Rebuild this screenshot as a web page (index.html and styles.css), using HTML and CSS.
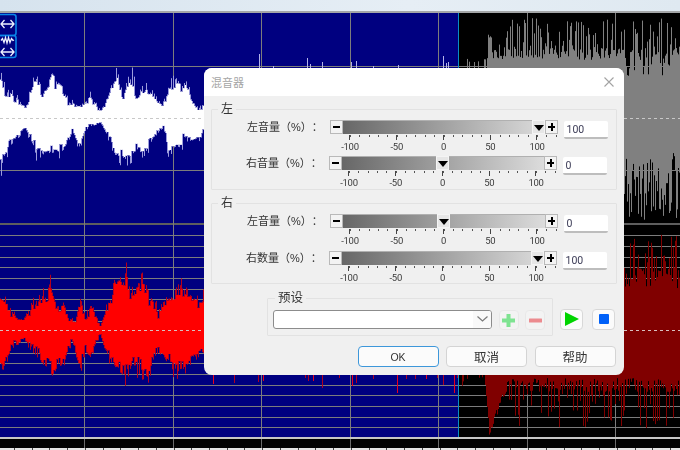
FILE: index.html
```html
<!DOCTYPE html>
<html lang="zh-CN">
<head>
<meta charset="utf-8">
<title>混音器</title>
<link rel="stylesheet" href="styles.css">
</head>
<body>
<div class="app">
  <div class="chrome"></div>
  <div class="editor">
    <canvas id="wave" class="wave" width="680" height="437"></canvas>
    <svg class="zoom-tools" width="18" height="46" viewBox="0 0 18 46" fill="none">
      <rect x="-4" y="1.500" width="20" height="21" rx="2.500" stroke="#0a84e8" stroke-width="1.600"/>
      <rect x="-4" y="22.500" width="20" height="22" rx="2.500" stroke="#0a84e8" stroke-width="1.600"/>
      <g stroke="#eef1ff" stroke-width="1.300">
        <path d="M1 11H14M4.500 7L1 11L4.500 15M10.500 7L14 11L10.500 15"/>
        <path d="M1 27.500L2.500 25.500L4 29.500L5.500 24.500L7 30L8.500 24.500L10 29.500L11.500 25.500L13 27.500L14 27"/>
        <path d="M1 39H14M4.500 35L1 39L4.500 43M10.500 35L14 39L10.500 43"/>
      </g>
    </svg>

    <section class="dialog">
      <header class="dialog-title">
        <span>混音器</span>
        <svg class="close" width="10" height="10" viewBox="0 0 10 10"><path d="M0.500 0.500L9.500 9.500M9.500 0.500L0.500 9.500" stroke="#a3a3a3" stroke-width="1.100" fill="none"/></svg>
      </header>
      <div class="dialog-body">
        <fieldset class="group">
          <legend>左</legend>
          <div class="row">
            <label class="row-label">左音量（%）：</label>
            <div class="slider">
              <div class="slider-bar">
                <span class="step step-minus"></span>
                <div class="track"><span class="thumb thumb-max"></span></div>
                <span class="step step-plus"></span>
              </div>
              <div class="scale"><span>-100</span><span>-50</span><span>0</span><span>50</span><span>100</span></div>
            </div>
            <input class="value" value="100">
          </div>
          <div class="row row-back">
            <label class="row-label">右音量（%）：</label>
            <div class="slider">
              <div class="slider-bar">
                <span class="step step-minus"></span>
                <div class="track"><span class="thumb thumb-mid"></span></div>
                <span class="step step-plus"></span>
              </div>
              <div class="scale"><span>-100</span><span>-50</span><span>0</span><span>50</span><span>100</span></div>
            </div>
            <input class="value" value="0">
          </div>
        </fieldset>

        <fieldset class="group group-right">
          <legend>右</legend>
          <div class="row row-tall">
            <label class="row-label">左音量（%）：</label>
            <div class="slider">
              <div class="slider-bar">
                <span class="step step-minus"></span>
                <div class="track"><span class="thumb thumb-mid"></span></div>
                <span class="step step-plus"></span>
              </div>
              <div class="scale"><span>-100</span><span>-50</span><span>0</span><span>50</span><span>100</span></div>
            </div>
            <input class="value" value="0">
          </div>
          <div class="row row-back">
            <label class="row-label">右数量（%）：</label>
            <div class="slider">
              <div class="slider-bar">
                <span class="step step-minus"></span>
                <div class="track"><span class="thumb thumb-max"></span></div>
                <span class="step step-plus"></span>
              </div>
              <div class="scale"><span>-100</span><span>-50</span><span>0</span><span>50</span><span>100</span></div>
            </div>
            <input class="value" value="100">
          </div>
        </fieldset>

        <div class="preset-row">
          <fieldset class="group preset">
            <legend>预设</legend>
            <div class="preset-controls">
              <div class="combo">
                <span class="combo-arrow">
                  <svg width="11" height="6" viewBox="0 0 11 6"><path d="M0.500 0.500L5.500 5L10.500 0.500" stroke="#7a7a7a" stroke-width="1.200" fill="none"/></svg>
                </span>
              </div>
              <button class="icon-btn icon-btn-off" type="button" aria-label="添加">
                <svg width="13" height="13" viewBox="0 0 13 13"><path d="M4.500 0H8.500V4.500H13V8.500H8.500V13H4.500V8.500H0V4.500H4.500Z" fill="#7ee391"/></svg>
              </button>
              <button class="icon-btn icon-btn-off" type="button" aria-label="删除">
                <svg width="13" height="13" viewBox="0 0 13 13"><rect y="4.500" width="13" height="4" rx="0.500" fill="#ec8b8f"/></svg>
              </button>
            </div>
          </fieldset>
          <button class="icon-btn icon-btn-wide" type="button" aria-label="播放">
            <svg width="14" height="14" viewBox="0 0 14 14"><path d="M0 0L14 7L0 14Z" fill="#00d400"/></svg>
          </button>
          <button class="icon-btn icon-btn-wide" type="button" aria-label="停止">
            <svg width="10" height="10" viewBox="0 0 10 10"><rect width="10" height="10" rx="1" fill="#0060f8"/></svg>
          </button>
        </div>

        <div class="actions">
          <button class="btn btn-default" type="button">OK</button>
          <button class="btn" type="button">取消</button>
          <button class="btn" type="button">帮助</button>
        </div>
      </div>
    </section>
  </div>
</div>
<script src="app.js"></script>
</body>
</html>
```

FILE: styles.css
```css
* { box-sizing: border-box; }

html, body {
  margin: 0;
  padding: 0;
  width: 680px;
  height: 450px;
  overflow: hidden;
  background: #000;
}

body {
  font-family: "Liberation Sans", "Noto Sans CJK SC", sans-serif;
  text-spacing-trim: space-all;
}

.app {
  display: flex;
  flex-direction: column;
  width: 680px;
  height: 450px;
}

.chrome {
  flex: 0 0 13px;
  background: linear-gradient(90deg, #d6e3ee, #e6eef5 60%, #dfe9f1);
  border-bottom: 2px solid #a4a6a8;
}

.editor {
  position: relative;
  flex: 1;
}

.wave {
  display: block;
  filter: blur(0.45px);
}

.zoom-tools {
  position: absolute;
  left: 0;
  top: 0;
}

.dialog {
  position: absolute;
  left: 204px;
  top: 55px;
  width: 419.500px;
  height: 306.500px;
  display: flex;
  flex-direction: column;
  background: #f0f0f0;
  border-radius: 8px;
  overflow: hidden;
  color: #2b2b2b;
  filter: blur(0.25px);
}

.dialog-title {
  flex: 0 0 28px;
  display: flex;
  align-items: center;
  justify-content: space-between;
  padding: 0 10px 0 7px;
  background: #fff;
  font-size: 11px;
  color: #a5a5a5;
}

.dialog-body {
  flex: 1;
  padding: 5px 7px 0;
}

.group {
  margin: 0;
  min-width: 0;
  padding: 3px 0 0;
  height: 89px;
  border: 1px solid #e2e2e2;
  border-radius: 1px;
}

.group-right {
  margin-top: 5px;
  height: 89px;
}

.group legend {
  margin-left: 6px;
  padding: 0 3px;
  font-size: 12px;
  line-height: 16px;
  color: #333;
}

.row {
  display: flex;
  align-items: flex-start;
  height: 36px;
}

.row-tall {
  height: 37px;
}

.row-back {
  margin-left: -1px;
}

.row-label {
  flex: 0 0 118px;
  padding: 0 0 0 35px;
  font-size: 11px;
  line-height: 14px;
  white-space: nowrap;
  color: #333;
}

.slider {
  flex: 0 0 228px;
  min-width: 0;
}

.slider-bar {
  display: flex;
  height: 14px;
}

.step {
  position: relative;
  flex: 0 0 13px;
  background: #f3f3f3;
  border: 1px solid #b9b9b9;
}

.step::before {
  content: "";
  position: absolute;
  left: 2px;
  right: 2px;
  top: 5px;
  height: 2px;
  background: #000;
}

.step-plus::after {
  content: "";
  position: absolute;
  left: 4.500px;
  top: 2px;
  width: 2px;
  height: 8px;
  background: #000;
}

.track {
  position: relative;
  flex: 1;
  background: linear-gradient(90deg, #676767, #dcdcdc);
  border-top: 1px solid #b0b0b0;
}

.thumb {
  position: absolute;
  top: -1px;
  width: 13px;
  height: 14px;
  background: #e6e6e6;
  box-shadow: inset 0 0 0 1px #f4f4f4;
}

.thumb::before {
  content: "";
  position: absolute;
  left: 1.500px;
  top: 5px;
  border-left: 5px solid transparent;
  border-right: 5px solid transparent;
  border-top: 6px solid #000;
}

.thumb-max { right: 0; }
.thumb-mid { left: 94px; }

.scale {
  display: flex;
  width: 234px;
  margin-left: -3.400px;
  padding-top: 1px;
  background: repeating-linear-gradient(90deg, #555 0 1px, transparent 1px 9.350px) 23.400px 1px / 100% 2px no-repeat;
}

.scale span {
  flex: 0 0 46.750px;
  display: flex;
  flex-direction: column;
  align-items: center;
  font-family: Roboto, "Liberation Sans", sans-serif;
  font-size: 9.500px;
  line-height: 10px;
  letter-spacing: -0.300px;
  color: #3b3b3b;
}

.scale span::before {
  content: "";
  width: 1px;
  height: 5px;
  margin-bottom: 1.500px;
  background: #444;
}

.value {
  flex: 0 0 44px;
  width: 44px;
  height: 18px;
  margin: 1px 0 0 6px;
  padding: 0 0 0 2.500px;
  background: #fff;
  border: 0;
  border-bottom: 2px solid #bdbdbd;
  border-radius: 2px;
  outline: 0;
  font-family: Roboto, "Liberation Sans", sans-serif;
  font-size: 10.500px;
  color: #3a3a55;
}

.preset-row {
  display: flex;
  align-items: flex-end;
  height: 52px;
  padding-left: 56px;
}

.preset {
  flex: 0 0 286px;
  height: 46px;
  padding: 4px 0 0 5px;
}

.preset legend {
  margin-left: 2px;
  font-size: 12.500px;
}

.preset-controls {
  display: flex;
  gap: 6.500px;
  align-items: flex-start;
}

.combo {
  flex: 0 0 219px;
  height: 18.500px;
  display: flex;
  justify-content: flex-end;
  background: #fff;
  border: 1px solid #8c8c8c;
  border-radius: 3px;
}

.combo-arrow {
  display: flex;
  align-items: center;
  justify-content: center;
  width: 18px;
  background: #f9f9f9;
  border-radius: 0 2px 2px 0;
}

.icon-btn {
  display: flex;
  align-items: center;
  justify-content: center;
  padding: 0;
  background: #fbfbfb;
  border: 1px solid #d8d8d8;
  border-radius: 4px;
}

.icon-btn-off {
  flex: 0 0 20px;
  height: 20px;
  background: #f3f3f3;
  border-color: #e8e8e8;
}

.icon-btn-wide {
  flex: 0 0 23px;
  height: 20.500px;
  margin: 0 0 6.500px 7px;
}

.icon-btn-wide + .icon-btn-wide {
  margin-left: 9px;
}

.actions {
  display: flex;
  justify-content: flex-end;
  gap: 7.500px;
  margin-top: 10px;
  padding-right: 1px;
}

.btn {
  width: 81px;
  height: 21px;
  padding: 0;
  background: #fbfbfb;
  border: 1px solid #d4d4d4;
  border-radius: 4px;
  font-family: "Liberation Sans", "Noto Sans CJK SC", sans-serif;
  font-size: 12.500px;
  color: #333;
}

.btn-default {
  border: 1.500px solid #3d97da;
  font-size: 10.500px;
}
```

FILE: app.js
```js
(function () {
  var canvas = document.getElementById('wave');
  var ctx = canvas.getContext('2d');
  ctx.translate(0, -13);

  var seed = 91173;
  function rnd() {
    seed = (seed * 1664525 + 1013904223) % 4294967296;
    return seed / 4294967296;
  }
  function rect(c, x, y, w, h) {
    ctx.fillStyle = c;
    ctx.fillRect(x, y, w, h);
  }
  function env(points, x) {
    for (var i = 1; i < points.length; i++) {
      if (x <= points[i][0]) {
        var a = points[i - 1], b = points[i];
        return a[1] + (b[1] - a[1]) * (x - a[0]) / (b[0] - a[0]);
      }
    }
    return points[points.length - 1][1];
  }

  /* background */
  rect('#000080', 0, 13, 458, 424);
  rect('#000000', 458, 13, 222, 424);

  /* grid */
  var gridColor = '#7c7c7c';
  [66, 170].forEach(function (y) { rect(gridColor, 0, y, 680, 1); });
  rect('#5e5e5e', 0, 223, 680, 2);
  for (var g = 0; g < 19; g++) {
    rect(gridColor, 0, Math.round(235.3 + g * 10.67), 680, 1);
  }
  for (var v = 0; v < 7; v++) {
    rect(gridColor, Math.round(84.3 + v * 88.45), 13, 1, 434);
  }

  /* draws columns around a centre, excess over neighbours in a softer tint */
  function drawColumns(heights, x0, dir, cy, solid, tint) {
    for (var i = 0; i < heights.length; i++) {
      var h = heights[i];
      var base = Math.min(h, heights[i - 1] || h, heights[i + 1] || h);
      if (dir < 0) {
        rect(solid, x0 + i, cy - base, 1, base);
        rect(tint, x0 + i, cy - h, 1, h - base);
      } else {
        rect(solid, x0 + i, cy, 1, base);
        rect(tint, x0 + i, cy + base, 1, h - base);
      }
    }
  }

  /* envelope with a slow wander of a few pixels plus single-column spikes */
  function peaks(points, cy, from, to) {
    var out = [];
    var wander = 0, left = 0;
    for (var x = from; x < to; x++) {
      if (left-- <= 0) {
        wander = (rnd() - 0.5) * 0.26;
        left = 2 + Math.floor(rnd() * 5);
      }
      var e = Math.abs(env(points, x) - cy);
      var r = rnd();
      var k = 0.92 + wander + (r < 0.16 ? 0.14 : r > 0.84 ? -0.2 : -rnd() * 0.08);
      out.push(Math.max(e * k, 3));
    }
    return out;
  }

  /* left channel, blue part */
  var whiteTop = [[0,75],[10,87],[20,100],[25,107],[33,83],[39,72],[43,87],[52,72],[62,80],[68,100],[80,107],[90,93],[100,110],[107,97],[116,68],[122,93],[132,72],[138,97],[147,83],[160,103],[167,87],[178,75],[187,87],[198,107],[206,105]];
  var whiteBot = [[0,172],[10,153],[17,140],[25,130],[33,150],[43,163],[53,157],[63,157],[72,132],[80,150],[87,130],[100,123],[110,142],[115,163],[127,163],[137,157],[147,150],[157,133],[163,128],[167,153],[177,147],[187,143],[200,137],[206,137]];
  drawColumns(peaks(whiteTop, 118, 0, 206), 0, -1, 118, '#ffffff', '#9c9cdc');
  drawColumns(peaks(whiteBot, 118, 0, 206), 0, 1, 118, '#ffffff', '#9c9cdc');
  [[259,54],[273,66],[307,58],[310,64],[322,62],[351,62],[356,61],[373,66],[398,65],[443,56],[446,63],[448,62]].forEach(function (s) {
    rect('#b4b4ea', s[0], s[1], 1, 118 - s[1]);
  });

  /* right channel, blue part */
  var redTop = [[0,295],[5,300],[17,317],[25,318],[33,298],[40,298],[50,283],[55,300],[62,297],[68,317],[75,320],[80,287],[85,312],[92,302],[100,325],[102,318],[115,277],[126,267],[130,290],[142,280],[150,290],[158,310],[163,297],[178,280],[187,293],[200,295],[206,295]];
  var redBot = [[0,365],[3,373],[5,363],[15,343],[23,342],[33,353],[40,363],[47,367],[52,378],[58,367],[65,367],[72,342],[80,375],[85,353],[90,360],[100,335],[103,347],[115,378],[126,387],[132,363],[142,382],[147,380],[157,353],[167,370],[183,372],[200,353],[206,353]];
  drawColumns(peaks(redTop, 330, 0, 206), 0, -1, 330, '#ff0000', '#b8001a');
  drawColumns(peaks(redBot, 330, 0, 206), 0, 1, 330, '#ff0000', '#b8001a');
  [[213,384],[234,383],[258,382],[263,381],[305,378],[308,381],[313,381],[322,388],[339,378],[352,386],[356,383],[373,379],[397,393],[406,379],[415,379],[426,379],[437,378],[443,385],[454,393],[457,378]].forEach(function (s, i) {
    rect(i % 3 === 0 ? '#e8001c' : '#b00020', s[0], 360, 1, s[1] - 360);
  });

  /* selection edge */
  rect('#0a8cc4', 458, 13, 1, 424);

  /* left channel, black part */
  var x, t, b, r;
  var GREY = '#808080';
  for (x = 459; x < 680; x++) {
    r = rnd();
    if (x < 487) {
      t = r < 0.22 ? 58 + rnd() * 8 : 68;
    } else if (r < 0.34) {
      t = 18 + rnd() * 30;
    } else if (x > 622 && r < 0.6) {
      t = 62 + rnd() * 14;
    } else {
      t = 48 + rnd() * 12;
    }
    if (x > 487 && x < 492) t = Math.min(t, 30 + rnd() * 20);
    b = 152 + Math.pow(rnd(), 0.8) * 68;
    rect(GREY, x, t, 1, b - t);
  }

  /* right channel, black part */
  var DARK = '#800000';
  for (x = 459; x < 680; x++) {
    r = rnd();
    t = r < 0.5 ? 234 + rnd() * 30 : 266 + rnd() * 24;
    var q = rnd();
    if (x < 485) {
      b = q < 0.3 ? 376 + rnd() * 10 : 372;
    } else if (x < 489) {
      b = 385 + (x - 485) * 11;
    } else if (x < 508) {
      b = Math.max(376, 428 - (x - 489) * 2.6) + rnd() * 8;
    } else {
      b = q < 0.34 ? 392 + rnd() * 36 : 378 + rnd() * 14;
    }
    rect(DARK, x, t, 1, b - t);
  }

  /* centre lines */
  for (x = 0; x < 680; x += 6) {
    rect('#c8c8c8', x, 118, 3, 1);
    rect('#d8c0c0', x, 330, 3, 1);
  }

  /* ruler */
  rect('#c6c6c6', 0, 437, 680, 2);
  rect('#000000', 0, 439, 680, 9);
  for (v = 0; v < 7; v++) {
    rect('#6a6a6a', Math.round(84.3 + v * 88.45), 439, 1, 9);
  }
  rect('#e2e2e2', 0, 448, 680, 2);
  for (x = 14; x < 680; x += 17.73) {
    rect('#444444', Math.round(x), 448, 1, 2);
  }
})();
```
